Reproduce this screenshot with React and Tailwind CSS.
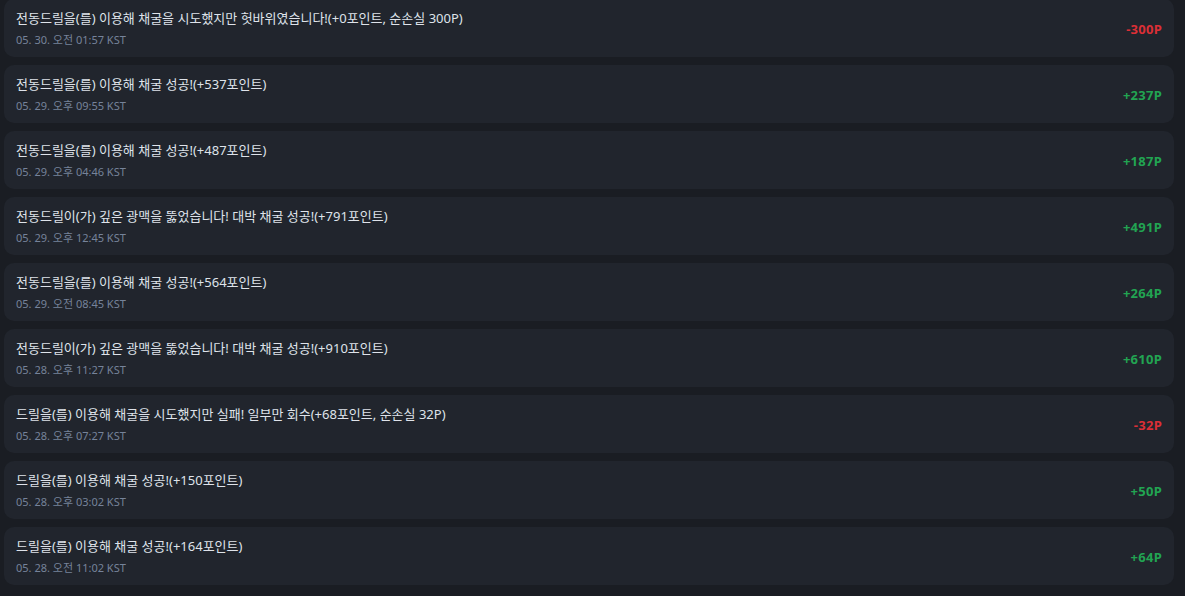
const items = [
  { text: '전동드릴을(를) 이용해 채굴을 시도했지만 헛바위였습니다!(+0포인트, 순손실 300P)', date: '05. 30. 오전 01:57 KST', pts: '-300P' },
  { text: '전동드릴을(를) 이용해 채굴 성공!(+537포인트)', date: '05. 29. 오후 09:55 KST', pts: '+237P' },
  { text: '전동드릴을(를) 이용해 채굴 성공!(+487포인트)', date: '05. 29. 오후 04:46 KST', pts: '+187P' },
  { text: '전동드릴이(가) 깊은 광맥을 뚫었습니다! 대박 채굴 성공!(+791포인트)', date: '05. 29. 오후 12:45 KST', pts: '+491P' },
  { text: '전동드릴을(를) 이용해 채굴 성공!(+564포인트)', date: '05. 29. 오전 08:45 KST', pts: '+264P' },
  { text: '전동드릴이(가) 깊은 광맥을 뚫었습니다! 대박 채굴 성공!(+910포인트)', date: '05. 28. 오후 11:27 KST', pts: '+610P' },
  { text: '드릴을(를) 이용해 채굴을 시도했지만 실패! 일부만 회수(+68포인트, 순손실 32P)', date: '05. 28. 오후 07:27 KST', pts: '-32P' },
  { text: '드릴을(를) 이용해 채굴 성공!(+150포인트)', date: '05. 28. 오후 03:02 KST', pts: '+50P' },
  { text: '드릴을(를) 이용해 채굴 성공!(+164포인트)', date: '05. 28. 오전 11:02 KST', pts: '+64P' },
];

export default function App() {
  return (
    <div
      className="min-h-[596px] bg-[#1a1d23] overflow-hidden"
      style={{ fontFamily: '"Noto Sans", "Noto Sans CJK KR", sans-serif' }}
    >
      <div className="-mt-px pl-1 pr-[11px] flex flex-col gap-2">
        {items.map((it, i) => (
          <div
            key={i}
            className="h-[58px] rounded-[10px] bg-[#21252d] px-3 flex items-center justify-between"
          >
            <div className="flex flex-col">
              <span className="text-[13px] leading-5 text-[#dfe3ea]">{it.text}</span>
              <span className="mt-1 text-[11px] leading-4 text-[#76839a]">{it.date}</span>
            </div>
            <span
              className={
                it.pts.startsWith('-')
                  ? 'pt-1 text-[13px] font-bold text-[#dc2f36] tracking-[0.02em]'
                  : 'pt-1 text-[13px] font-bold text-[#22a452] tracking-[0.02em]'
              }
            >
              {it.pts}
            </span>
          </div>
        ))}
      </div>
    </div>
  );
}
